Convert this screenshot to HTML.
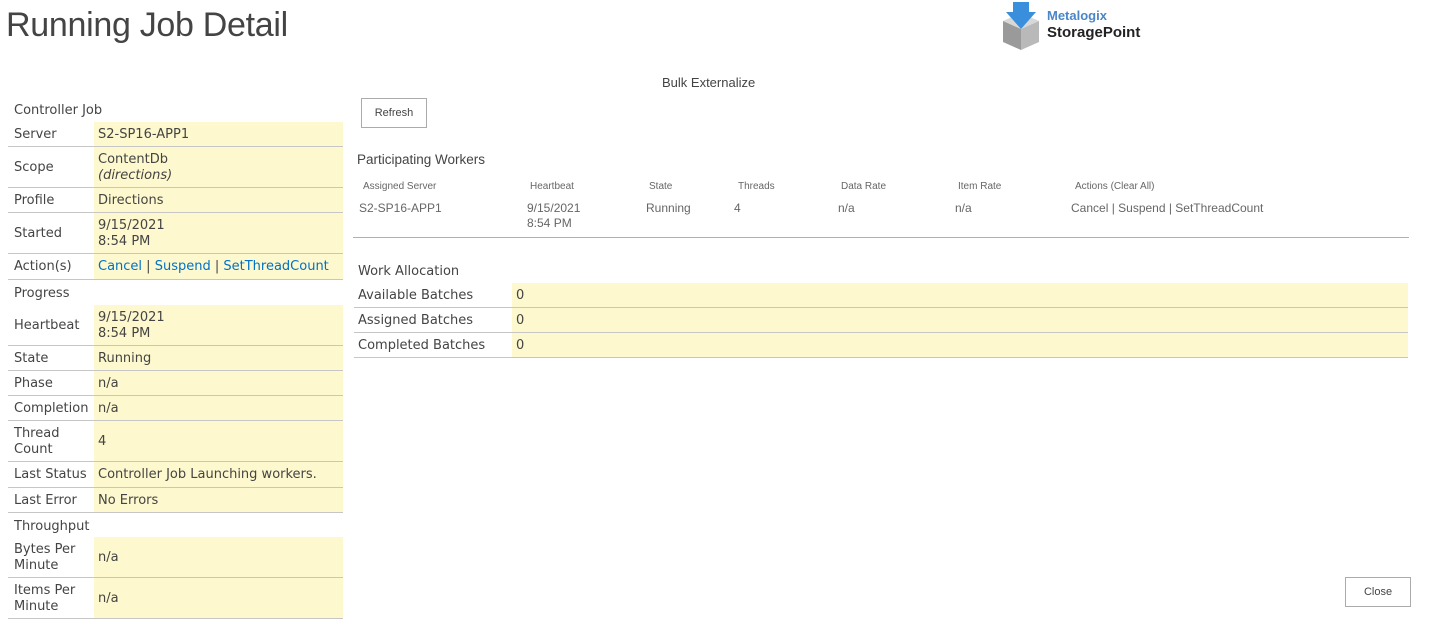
<!DOCTYPE html>
<html><head><meta charset="utf-8"><style>
*{margin:0;padding:0;box-sizing:border-box}
body{width:1430px;height:623px;background:#fff;position:relative;overflow:hidden;font-family:"DejaVu Sans",Verdana,sans-serif;color:#444}
.a{position:absolute}
.r{position:absolute;left:8px;width:335px;border-bottom:1px solid #c6c6c6;font-size:13px;line-height:16px}
.r.h{border-bottom:none}
.r.h .l{width:auto;white-space:nowrap}
.r .l{position:absolute;left:6px;top:1px;bottom:0;display:flex;align-items:center;width:86px}
.r .v{position:absolute;left:86px;right:0;top:0;bottom:0;background:#fdf8cd;display:flex;align-items:center;padding-left:4px;padding-top:1px}
.lk{color:#0072c6}
.seg{font-family:"Liberation Sans",sans-serif}
.w{position:absolute;font-family:"Liberation Sans",sans-serif;color:#666}
.btn{position:absolute;border:1px solid #ababab;background:#fff;font-family:"Liberation Sans",sans-serif;font-size:11px;color:#444;display:flex;align-items:center;justify-content:center}
.wr{position:absolute;left:354px;width:1054px;border-bottom:1px solid #c6c6c6;height:25px;font-size:13px}
.wr .l{position:absolute;left:4px;top:1px;bottom:0;display:flex;align-items:center}
.wr .v{position:absolute;left:158px;right:0;top:0;bottom:0;background:#fdf8cd;display:flex;align-items:center;padding-left:4px;padding-top:1px}
</style></head><body>
<div class="a seg" style="left:6px;top:6px;font-size:34px;color:#444;letter-spacing:-0.3px">Running Job Detail</div>

<svg class="a" style="left:1002px;top:2px" width="38" height="49" viewBox="0 0 38 49">
<polygon points="1,19 19,11 37,19 19,27" fill="#d8d8d8"/>
<polygon points="1,19 19,27 19,48 1,40" fill="#9a9a9a"/>
<polygon points="37,19 19,27 19,48 37,40" fill="#b9b9b9"/>
<polygon points="11,0 27,0 27,10 34,10 19,27 4,10 11,10" fill="#3a8fdc"/>
</svg>
<div class="a seg" style="left:1047px;top:8px;font-size:13px;font-weight:bold;color:#4a86c8">Metalogix</div>
<div class="a seg" style="left:1047px;top:24px;font-size:15px;font-weight:bold;color:#222">StoragePoint</div>

<div class="w" style="left:662px;top:75px;font-size:13px;color:#444">Bulk Externalize</div>
<div class="btn" style="left:361px;top:98px;width:66px;height:30px">Refresh</div>

<div class="r h" style="top:98px;height:25px"><div class="l">Controller Job</div></div>
<div class="r" style="top:122px;height:25px"><div class="l">Server</div><div class="v">S2-SP16-APP1</div></div>
<div class="r" style="top:147px;height:41px"><div class="l">Scope</div><div class="v"><div>ContentDb<br><i>(directions)</i></div></div></div>
<div class="r" style="top:188px;height:25px"><div class="l">Profile</div><div class="v">Directions</div></div>
<div class="r" style="top:213px;height:41px"><div class="l">Started</div><div class="v"><div>9/15/2021<br>8:54 PM</div></div></div>
<div class="r" style="top:254px;height:26px"><div class="l">Action(s)</div><div class="v" style="white-space:nowrap"><span><span class="lk">Cancel</span> | <span class="lk">Suspend</span> | <span class="lk">SetThreadCount</span></span></div></div>
<div class="r h" style="top:281px;height:25px"><div class="l">Progress</div></div>
<div class="r" style="top:305px;height:41px"><div class="l">Heartbeat</div><div class="v"><div>9/15/2021<br>8:54 PM</div></div></div>
<div class="r" style="top:346px;height:25px"><div class="l">State</div><div class="v">Running</div></div>
<div class="r" style="top:371px;height:25px"><div class="l">Phase</div><div class="v">n/a</div></div>
<div class="r" style="top:396px;height:25px"><div class="l">Completion</div><div class="v">n/a</div></div>
<div class="r" style="top:421px;height:41px"><div class="l"><div>Thread<br>Count</div></div><div class="v">4</div></div>
<div class="r" style="top:462px;height:26px"><div class="l" style="white-space:nowrap">Last Status</div><div class="v" style="white-space:nowrap">Controller Job Launching workers.</div></div>
<div class="r" style="top:488px;height:25px"><div class="l">Last Error</div><div class="v">No Errors</div></div>
<div class="r h" style="top:514px;height:24px"><div class="l">Throughput</div></div>
<div class="r" style="top:537px;height:41px"><div class="l"><div>Bytes Per<br>Minute</div></div><div class="v">n/a</div></div>
<div class="r" style="top:578px;height:41px"><div class="l"><div>Items Per<br>Minute</div></div><div class="v">n/a</div></div>

<div class="w" style="left:357px;top:152px;font-size:13.5px;color:#444">Participating Workers</div>
<div class="w" style="left:363px;top:181px;font-size:10px">Assigned Server</div>
<div class="w" style="left:530px;top:181px;font-size:10px">Heartbeat</div>
<div class="w" style="left:649px;top:181px;font-size:10px">State</div>
<div class="w" style="left:738px;top:181px;font-size:10px">Threads</div>
<div class="w" style="left:841px;top:181px;font-size:10px">Data Rate</div>
<div class="w" style="left:958px;top:181px;font-size:10px">Item Rate</div>
<div class="w" style="left:1075px;top:181px;font-size:10px">Actions (Clear All)</div>
<div class="w" style="left:359px;top:201px;font-size:12px">S2-SP16-APP1</div>
<div class="w" style="left:527px;top:201px;font-size:12px;line-height:15px">9/15/2021<br>8:54 PM</div>
<div class="w" style="left:646px;top:201px;font-size:12px">Running</div>
<div class="w" style="left:734px;top:201px;font-size:12px">4</div>
<div class="w" style="left:838px;top:201px;font-size:12px">n/a</div>
<div class="w" style="left:955px;top:201px;font-size:12px">n/a</div>
<div class="w" style="left:1071px;top:201px;font-size:12px">Cancel | Suspend | SetThreadCount</div>
<div class="a" style="left:353px;top:237px;width:1056px;height:1px;background:#b0b0b0"></div>

<div class="a" style="left:358px;top:264px;font-size:13px">Work Allocation</div>
<div class="wr" style="top:283px"><div class="l">Available Batches</div><div class="v">0</div></div>
<div class="wr" style="top:308px"><div class="l">Assigned Batches</div><div class="v">0</div></div>
<div class="wr" style="top:333px"><div class="l">Completed Batches</div><div class="v">0</div></div>

<div class="btn" style="left:1345px;top:577px;width:66px;height:30px">Close</div>
</body></html>
